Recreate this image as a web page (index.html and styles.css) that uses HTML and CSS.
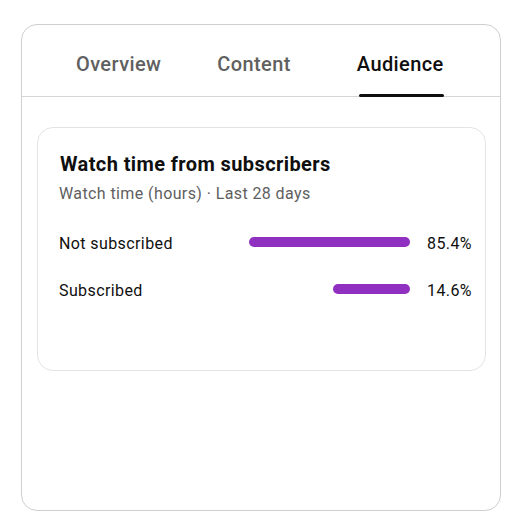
FILE: index.html
```html
<!DOCTYPE html>
<html lang="en">
<head>
<meta charset="utf-8">
<title>Audience</title>
<link rel="stylesheet" href="styles.css">
</head>
<body>
<div class="frame">
  <nav class="tabs">
    <div class="tab">Overview</div>
    <div class="tab">Content</div>
    <div class="tab tab-active">Audience</div>
  </nav>
  <section class="card">
    <h2 class="card-title">Watch time from subscribers</h2>
    <p class="card-sub">Watch time (hours) · Last 28 days</p>
    <div class="rows">
      <div class="row">
        <span class="row-label">Not subscribed</span>
        <span class="bar-track"><span class="bar" style="width:161px"></span></span>
        <span class="row-pct">85.4%</span>
      </div>
      <div class="row">
        <span class="row-label">Subscribed</span>
        <span class="bar-track"><span class="bar" style="width:77px"></span></span>
        <span class="row-pct">14.6%</span>
      </div>
    </div>
  </section>
</div>
</body>
</html>
```
FILE: styles.css
```css
* { box-sizing: border-box; }
html, body { margin: 0; padding: 0; background: #fff; }
body { font-family: Roboto, "Noto Sans", Arial, sans-serif; color: #0f0f0f; letter-spacing: 0.4px; }

.frame {
  margin: 24px 0 0 21px;
  width: 480px;
  height: 487px;
  border: 1px solid #cfcfcf;
  border-radius: 16px;
  overflow: hidden;
}

.tabs {
  display: flex;
  height: 72px;
  padding-left: 54px;
  border-bottom: 1px solid #d6d6d6;
}
.tab {
  position: relative;
  padding-top: 27px;
  font-size: 20px;
  line-height: 24px;
  font-weight: 500;
  color: #606060;
  margin-right: 56px;
}
.tab:nth-child(2) { margin-right: 66px; }
.tab-active { color: #0f0f0f; }
.tab-active::after {
  content: "";
  position: absolute;
  left: 2px;
  right: 0;
  bottom: -1px;
  height: 3px;
  border-radius: 2px;
  background: #0f0f0f;
}

.card {
  margin: 30px 14px 0 15px;
  height: 244px;
  border: 1px solid #e3e3e3;
  border-radius: 16px;
  padding: 24px 13px 0 21px;
}
.card-title {
  margin: 0 0 0 1px;
  font-size: 20px;
  line-height: 24px;
  font-weight: 700;
}
.card-sub {
  margin: 8px 0 0;
  font-size: 16px;
  line-height: 20px;
  color: #606060;
}
.rows {
  margin-top: 28px;
  display: flex;
  flex-direction: column;
  gap: 23px;
}
.row {
  display: grid;
  grid-template-columns: 1fr 161px 62px;
  align-items: center;
  height: 24px;
  font-size: 16px;
  line-height: 24px;
}
.bar-track {
  display: flex;
  justify-content: flex-end;
  margin-top: -4px;
}
.bar {
  display: block;
  height: 10px;
  border-radius: 5px;
  background: #9030c0;
}
.row-pct { text-align: right; }
```
